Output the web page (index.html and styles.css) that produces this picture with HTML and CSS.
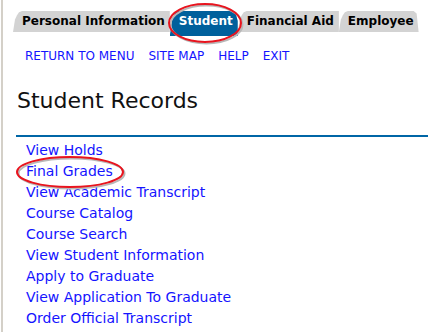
FILE: index.html
```html
<!DOCTYPE html>
<html>
<head>
<meta charset="utf-8">
<link rel="stylesheet" href="styles.css">
</head>
<body>
<div class="page">
  <div class="tabs">
    <div class="tab">Personal Information</div>
    <div class="tab active">Student</div>
    <div class="tab">Financial Aid</div>
    <div class="tab last">Employee</div>
  </div>
  <div class="menu">
    <a href="#">RETURN TO MENU</a>
    <a href="#">SITE MAP</a>
    <a href="#">HELP</a>
    <a href="#">EXIT</a>
  </div>
  <h1 class="title">Student Records</h1>
  <div class="rule"></div>
  <ul class="links">
    <li><a href="#">View Holds</a></li>
    <li><a href="#">Final Grades</a></li>
    <li><a href="#">View Academic Transcript</a></li>
    <li><a href="#">Course Catalog</a></li>
    <li><a href="#">Course Search</a></li>
    <li><a href="#">View Student Information</a></li>
    <li><a href="#">Apply to Graduate</a></li>
    <li><a href="#">View Application To Graduate</a></li>
    <li><a href="#">Order Official Transcript</a></li>
  </ul>
  <svg class="marks" width="428" height="332" viewBox="0 0 428 332">
    <ellipse cx="204" cy="23" rx="36" ry="19" fill="none" stroke="#b8b8b8" stroke-width="2" transform="translate(1.5,1.5)"/>
    <ellipse cx="204" cy="23" rx="36" ry="19" fill="none" stroke="#e8141e" stroke-width="2"/>
    <ellipse cx="69" cy="172" rx="53" ry="15" fill="none" stroke="#b8b8b8" stroke-width="2" transform="translate(1.5,1.5)"/>
    <ellipse cx="69" cy="172" rx="53" ry="15" fill="none" stroke="#e8141e" stroke-width="2"/>
  </svg>
</div>
</body>
</html>
```
FILE: styles.css
```css
html, body {
  margin: 0;
  padding: 0;
  background: #fff;
}
.page {
  position: relative;
  width: 425px;
  height: 332px;
  margin-left: 1px;
  border-left: 2px solid #d4d0c8;
  overflow: hidden;
  font-family: "DejaVu Sans", Verdana, sans-serif;
}
.tabs {
  display: flex;
  align-items: flex-start;
  padding: 11px 0 0 10px;
}
.tab {
  height: 21px;
  line-height: 21px;
  font-size: 12px;
  font-weight: bold;
  color: #000;
  background: #d3d3d3;
  padding: 0 5px 0 9px;
  clip-path: polygon(0 100%, 2px 40%, 4px 20%, 6px 6%, 9px 0, 100% 0, 100% 100%);
}
.tab.active {
  height: 25px;
  background: #00609c;
  color: #fff;
  clip-path: polygon(0 100%, 2px 40%, 4px 20%, 6px 6%, 9px 0, calc(100% - 4px) 0, calc(100% - 2px) 10%, 100% 40%, 100% 100%);
}
.tab.last {
  clip-path: polygon(0 100%, 2px 40%, 4px 20%, 6px 6%, 9px 0, calc(100% - 5px) 0, calc(100% - 2px) 12%, 100% 100%);
}
.menu {
  display: flex;
  gap: 14px;
  padding: 13px 0 0 22px;
  font-size: 12px;
  line-height: 15px;
}
.menu a, .links a {
  color: #1414ff;
  text-decoration: none;
}
.title {
  margin: 24px 0 0 14px;
  font-size: 22px;
  font-weight: normal;
  line-height: 26px;
  color: #111;
}
.rule {
  margin: 21px 0 0 13px;
  height: 2px;
  background: #0066a6;
}
.links {
  list-style: none;
  margin: 3px 0 0 0;
  padding: 0 0 0 23px;
  font-size: 14px;
  line-height: 21px;
}
.marks {
  position: absolute;
  left: -2px;
  top: 0;
  pointer-events: none;
}
```
